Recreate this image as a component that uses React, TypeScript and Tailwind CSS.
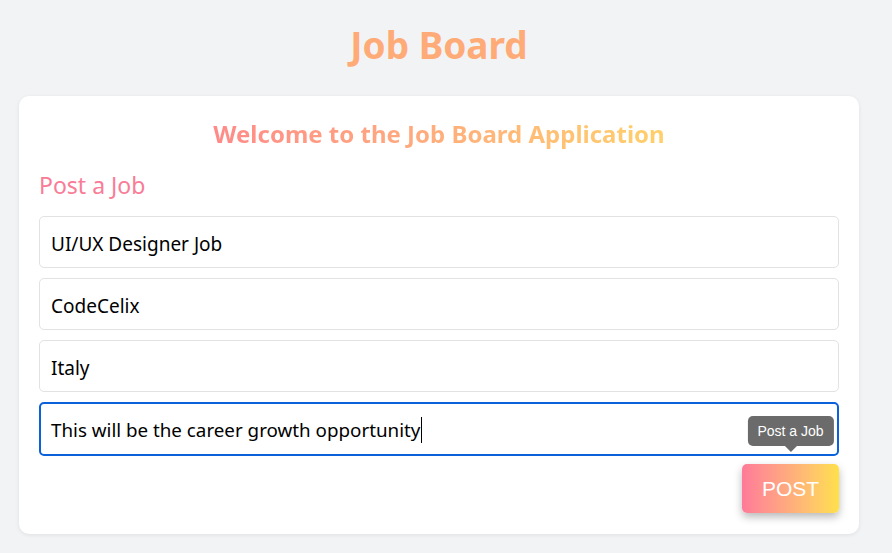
import { useState } from "react";

const fieldClass =
  "h-[52px] w-full rounded-[5px] border border-[#e2e2e2] bg-white px-[11px] pt-[3px] text-[19px] text-black outline-none";

export default function App() {
  const [title, setTitle] = useState("UI/UX Designer Job");
  const [company, setCompany] = useState("CodeCelix");
  const [location, setLocation] = useState("Italy");
  const [description, setDescription] = useState("This will be the career growth opportunity");

  return (
    <div className="min-h-[553px] w-full bg-[#f2f3f5] font-['Noto_Sans','Open_Sans',sans-serif]">
      <div className="w-[878px] px-[19px] pb-[19px]">
        <h1 className="pt-[20px] pb-[26px] text-center text-[37px] font-bold leading-[50px] text-[#ffab78]">
          Job Board
        </h1>

        <div className="rounded-[10px] bg-white px-[20px] pt-[20px] pb-[21px] shadow-[0_1px_4px_rgba(0,0,0,0.08)]">
          <h2 className="mx-auto w-fit bg-gradient-to-r from-[#ff8a88] to-[#ffd06a] bg-clip-text text-center text-[24px] font-bold leading-[36px] text-transparent">
            Welcome to the Job Board Application
          </h2>

          <h3 className="mt-[18px] text-[23px] leading-[30px] text-[#f97c97]">Post a Job</h3>

          <div className="mt-[16px] flex flex-col gap-[10px]">
            <input className={fieldClass} value={title} onChange={(e) => setTitle(e.target.value)} />
            <input className={fieldClass} value={company} onChange={(e) => setCompany(e.target.value)} />
            <input className={fieldClass} value={location} onChange={(e) => setLocation(e.target.value)} />
            <div className="flex h-[54px] w-full items-center rounded-[5px] border-2 border-[#0b61d9] bg-white px-[10px] pt-[2px] text-[18.8px] text-black">
              <span>{description}</span>
              <span className="ml-px inline-block h-[26px] w-px bg-black" />
              <input className="hidden" value={description} onChange={(e) => setDescription(e.target.value)} />
            </div>
          </div>

          <div className="mt-[8px] flex justify-end">
            <div className="relative">
              <div className="absolute bottom-[calc(100%+18px)] left-1/2 -translate-x-1/2 whitespace-nowrap rounded-[5px] bg-[#6b6b6b] px-[10px] py-[5px] font-['Liberation_Sans',Arial,sans-serif] text-[14px] leading-[20px] text-white">
                Post a Job
                <span className="absolute top-full left-1/2 -translate-x-1/2 border-x-[6px] border-t-[6px] border-x-transparent border-t-[#6b6b6b]" />
              </div>
              <button
                type="button"
                className="h-[49px] w-[97px] rounded-[5px] bg-gradient-to-r from-[#ff7a98] via-[#ffad7c] to-[#ffe04a] font-['Liberation_Sans',Arial,sans-serif] text-[21px] text-white shadow-[0_4px_8px_rgba(0,0,0,0.28)]"
              >
                POST
              </button>
            </div>
          </div>
        </div>
      </div>
    </div>
  );
}
